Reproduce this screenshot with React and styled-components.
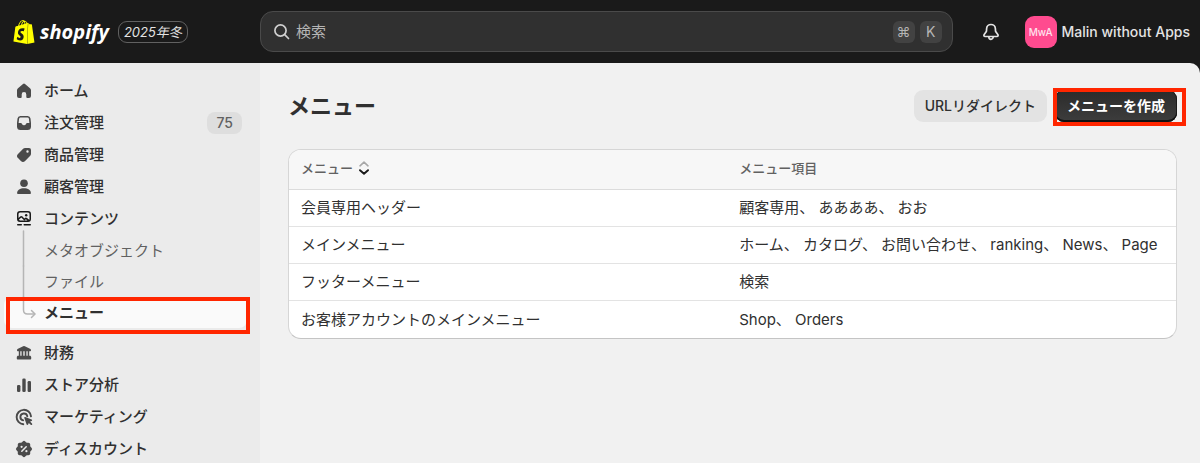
import React from "react";
import styled, { createGlobalStyle, css } from "styled-components";
import { SiShopify } from "react-icons/si";

const GlobalStyle = createGlobalStyle`
  *, *::before, *::after { box-sizing: border-box; }
  body {
    margin: 0;
    background: #1a1a1a;
    color: #303030;
    font-family: Inter, "Noto Sans CJK JP", sans-serif;
    font-size: 15px;
    line-height: 20px;
  }
  button, input { font: inherit; color: inherit; }
  ul { list-style: none; margin: 0; padding: 0; }
`;

const Shell = styled.div`
  display: flex;
  flex-direction: column;
  height: 100vh;
`;

/* ---------- top bar ---------- */

const TopBar = styled.header`
  display: flex;
  align-items: center;
  flex: none;
  height: 63px;
  padding-right: 10px;
  color: #e3e3e3;
`;

const Brand = styled.div`
  display: flex;
  align-items: center;
  width: 260px;
  flex: none;
  padding-left: 12px;
`;

const BrandLink = styled.a`
  display: flex;
  align-items: center;
  gap: 4px;
  color: #fff;
  text-decoration: none;

  svg { color: #ffff00; }
`;

const Wordmark = styled.span`
  font-family: "Open Sans", sans-serif;
  font-size: 20px;
  font-weight: 700;
  font-style: italic;
  line-height: 24px;
`;

const Edition = styled.span`
  margin-left: 9px;
  padding: 0 5px;
  border: 1px solid #616161;
  border-radius: 9px;
  font-size: 13px;
  font-style: italic;
  line-height: 20px;
`;

const Search = styled.label`
  display: flex;
  align-items: center;
  flex: 1;
  min-width: 0;
  height: 41px;
  gap: 6px;
  padding: 0 10px 0 12px;
  background: #303030;
  border: 1px solid #4a4a4a;
  border-radius: 13px;
`;

const SearchInput = styled.input`
  flex: 1;
  min-width: 0;
  padding: 0;
  border: 0;
  outline: 0;
  background: none;

  &::placeholder { color: #b5b5b5; opacity: 1; }
`;

const Keys = styled.span`
  display: flex;
  gap: 5px;
`;

const Key = styled.kbd`
  width: 22px;
  height: 22px;
  border-radius: 6px;
  background: #424242;
  color: #b5b5b5;
  font-family: Inter, "DejaVu Sans", sans-serif;
  font-size: 14px;
  line-height: 22px;
  text-align: center;
`;

const BellButton = styled.button`
  display: grid;
  place-items: center;
  width: 32px;
  height: 32px;
  margin: 0 18px 0 22px;
  padding: 0;
  border: 0;
  background: none;
`;

const Account = styled.button`
  display: flex;
  align-items: center;
  gap: 5px;
  padding: 0;
  border: 0;
  background: none;
  font-size: 14px;
  font-weight: 500;
  white-space: nowrap;
`;

const Avatar = styled.span`
  width: 32px;
  height: 32px;
  border-radius: 9px;
  background: #ff4b8f;
  color: #ffe3ee;
  font-size: 10px;
  font-weight: 500;
  line-height: 32px;
  text-align: center;
`;

/* ---------- sidebar ---------- */

const Body = styled.div`
  display: flex;
  flex: 1;
  min-height: 0;
  overflow: hidden;
  border-top-right-radius: 10px;
  background: #f1f1f1;
`;

const Sidebar = styled.nav`
  flex: none;
  width: 260px;
  padding: 12px 13px 0 4px;
  overflow: hidden;
  background: #ebebeb;
`;

const linkBase = css`
  display: flex;
  align-items: center;
  gap: 10px;
  padding: 0 5px 0 10px;
  text-decoration: none;
`;

const NavLink = styled.a`
  ${linkBase}
  height: 32px;
  color: #303030;
  font-weight: 500;
`;

const NavLabel = styled.span`
  flex: 1;
`;

const NavIcon = styled.svg`
  flex: none;
  width: 20px;
  height: 20px;
  fill: ${(p) => (p.$active ? "#1a1a1a" : "#4a4a4a")};
`;

const Count = styled.span`
  padding: 0 9px;
  border-radius: 8px;
  background: #dedede;
  color: #616161;
  font-size: 14px;
  line-height: 22px;
`;

const SubList = styled.ul`
  margin-bottom: 9px;
`;

const SubLink = styled.a`
  ${linkBase}
  position: relative;
  height: 31px;
  border-radius: 8px;
  color: ${(p) => (p.$selected ? "#303030" : "#616161")};
  background: ${(p) => (p.$selected ? "#fafafa" : "none")};
  font-weight: ${(p) => (p.$selected ? 700 : 400)};
`;

const Connector = styled.svg`
  flex: none;
  width: 20px;
  height: 31px;
  overflow: visible;
  fill: none;
  stroke: #b5b5b5;
  stroke-width: 1.5;
  stroke-linecap: round;
  stroke-linejoin: round;
`;

const Highlight = styled.span`
  position: absolute;
  inset: ${(p) => p.$inset};
  border: 4px solid #ff2600;
  pointer-events: none;
`;

/* ---------- main ---------- */

const Main = styled.main`
  flex: 1;
  min-width: 0;
  padding: 27px 23px 0 28px;
`;

const PageHeader = styled.div`
  display: flex;
  align-items: center;
  justify-content: space-between;
  height: 32px;
  margin-bottom: 27px;
`;

const Title = styled.h1`
  margin: 0;
  font-size: 22px;
  font-weight: 700;
  line-height: 28px;
`;

const Actions = styled.div`
  display: flex;
  gap: 8px;
`;

const ActionSlot = styled.div`
  position: relative;
`;

const Button = styled.button`
  height: 32px;
  padding: 0 11px;
  border: 0;
  border-radius: 9px;
  background: #e3e3e3;
  font-size: 14px;
  font-weight: 500;
  white-space: nowrap;

  ${(p) =>
    p.$primary &&
    css`
      padding: 0 12px;
      background: linear-gradient(#2b2b2b, #3d3d3d);
      box-shadow: inset 0 -2px 0 #111, inset -1px 0 0 #1a1a1a, inset 1px 0 0 #1a1a1a;
      color: #fff;
      font-weight: 700;
    `}
`;

const Card = styled.div`
  overflow: hidden;
  border: 1px solid #d6d6d6;
  border-bottom-color: #c4c4c4;
  border-radius: 13px;
  background: #fff;
`;

const Table = styled.table`
  width: 100%;
  table-layout: fixed;
  border-collapse: separate;
  border-spacing: 0;
  text-align: left;
`;

const HeadCell = styled.th`
  width: ${(p) => p.$width};
  height: 40px;
  padding: 0 12px 3px;
  border-bottom: 1px solid #dcdcdc;
  background: #f7f7f7;
  color: #616161;
  font-size: 13px;
  font-weight: 500;
`;

const SortButton = styled.button`
  display: flex;
  align-items: center;
  gap: 5px;
  padding: 0;
  border: 0;
  background: none;
`;

const Cell = styled.td`
  height: 37px;
  padding: 0 12px;
  border-bottom: 1px solid #e3e3e3;
  white-space: nowrap;

  tr:last-child > & { border-bottom: 0; }
`;

/* ---------- icons ---------- */

const icons = {
  home: (
    <path d="M9 3a1.6 1.6 0 0 1 2 0l5 4.2c.7.6 1 1.3 1 2.1V15a2 2 0 0 1-2 2h-1.7a1 1 0 0 1-1-1v-2.6a2.3 2.3 0 0 0-4.6 0V16a1 1 0 0 1-1 1H5a2 2 0 0 1-2-2V9.300c0-.8.3-1.500 1-2.100z" />
  ),
  orders: (
    <path
      fillRule="evenodd"
      d="M6.500 3h7A3 3 0 0 1 16.500 5.600L17 10v3.500a3.500 3.500 0 0 1-3.500 3.500h-7A3.500 3.500 0 0 1 3 13.500V10l.5-4.400A3 3 0 0 1 6.500 3zM6.600 4.500a1.500 1.500 0 0 0-1.500 1.300L4.600 10h2.200c.6 0 1 .4 1.200.9a2.200 2.200 0 0 0 4 0c.2-.5.6-.9 1.200-.9h2.200l-.5-4.200a1.500 1.500 0 0 0-1.500-1.300z"
    />
  ),
  products: (
    <path
      fillRule="evenodd"
      d="M11.200 3H15a2 2 0 0 1 2 2v3.800c0 .9-.3 1.700-1 2.300l-4.900 4.900a3 3 0 0 1-4.200 0L4 13.100a3 3 0 0 1 0-4.200L8.900 4c.6-.6 1.400-1 2.300-1zM13.500 5.300a1.200 1.200 0 1 0 0 2.400 1.200 1.200 0 0 0 0-2.400z"
    />
  ),
  customers: (
    <>
      <circle cx="10" cy="6.300" r="3.800" />
      <path d="M3.100 16c0-3 3-4.800 6.900-4.800s6.900 1.800 6.900 4.800c0 .7-.4 1-1 1H4.100c-.6 0-1-.3-1-1z" />
    </>
  ),
  content: (
    <>
      <path
        fillRule="evenodd"
        d="M6 2h8a3 3 0 0 1 3 3v5a3 3 0 0 1-3 3H6a3 3 0 0 1-3-3V5a3 3 0 0 1 3-3zM6 3.500A1.500 1.500 0 0 0 4.500 5v4l1.600-1.500a1.700 1.700 0 0 1 2.400 0l1.800 1.900.5-.4a1.700 1.700 0 0 1 2.200 0l2.200 1.800c.2-.2.3-.5.3-.8V5A1.500 1.500 0 0 0 14 3.500zM5 10.600c.2.500.6.900 1.200.9H13.500l-1.600-1.300-1.600 1.300-3-3z"
      />
      <circle cx="12.200" cy="6.200" r="1.200" />
      <rect x="3" y="15" width="5" height="1.500" rx=".7" />
      <rect x="9.500" y="15" width="7.500" height="1.500" rx=".7" />
    </>
  ),
  finance: (
    <path d="M9.200 3.200a1.800 1.800 0 0 1 1.600 0l5.200 2.600c.6.300 1 .8 1 1.400 0 .6-.4 1-1 1H15.200v4.600h.6c.8 0 1.400.7 1.400 1.500v1.200c0 .6-.4 1-1 1H3.800c-.6 0-1-.4-1-1v-1.200c0-.8.6-1.500 1.400-1.500h.6V8.200H4c-.6 0-1-.4-1-1 0-.6.400-1.100 1-1.400zM6.300 8.200v4.600h1.300V8.200zM9.300 8.200v4.600h1.400V8.200zM12.400 8.200v4.600h1.300V8.200z" fillRule="evenodd" />
  ),
  analytics: (
    <>
      <rect x="3" y="10" width="3.400" height="7" rx="1.300" />
      <rect x="8.300" y="3.500" width="3.400" height="13.500" rx="1.300" />
      <rect x="13.600" y="6" width="3.400" height="11" rx="1.300" />
    </>
  ),
  marketing: (
    <>
      <g fill="none" stroke="#4a4a4a" strokeWidth="1.900" strokeLinecap="round">
        <path d="M17 9.300A7.200 7.200 0 1 0 9.300 17.200" />
        <path d="M13.300 9.200A3.500 3.500 0 1 0 9.200 13.400" />
      </g>
      <path d="M10.300 11c-.2-.6.400-1.100 1-.9l6.300 2.300c.7.300.7 1.200 0 1.500l-1.500.7 1.900 1.900a.9.900 0 0 1-1.300 1.300l-1.900-1.900-.7 1.500c-.3.700-1.200.6-1.500 0z" />
    </>
  ),
  discounts: (
    <>
      <rect x="3.800" y="3.800" width="12.400" height="12.400" rx="1.800" />
      <rect x="3.800" y="3.800" width="12.400" height="12.400" rx="1.800" transform="rotate(45 10 10)" />
      <path d="M7.800 12.200l4.400-4.400" stroke="#ebebeb" strokeWidth="1.500" strokeLinecap="round" />
      <circle cx="7.600" cy="7.800" r="1.100" fill="#ebebeb" />
      <circle cx="12.400" cy="12.200" r="1.100" fill="#ebebeb" />
    </>
  ),
};

function NavItem({ icon, label, count, active }) {
  return (
    <NavLink href="#">
      <NavIcon viewBox="0 0 20 20" $active={active} aria-hidden="true">
        {icons[icon]}
      </NavIcon>
      <NavLabel>{label}</NavLabel>
      {count && <Count>{count}</Count>}
    </NavLink>
  );
}

function SubItem({ label, first, selected }) {
  return (
    <SubLink href="#" $selected={selected} aria-current={selected ? "page" : undefined}>
      <Connector viewBox="0 0 20 31" aria-hidden="true">
        {selected ? (
          <>
            <path d="M9.500 0V13Q9.500 17 13.500 17H20.500" />
            <path d="M17.500 13.500L21 17l-3.500 3.500" />
          </>
        ) : (
          <path d={first ? "M9.500 -4V31" : "M9.500 0V31"} />
        )}
      </Connector>
      <NavLabel>{label}</NavLabel>
      {selected && <Highlight $inset="0 -3px -6px 2px" />}
    </SubLink>
  );
}

const menus = [
  ["会員専用ヘッダー", "顧客専用、 ああああ、 おお"],
  ["メインメニュー", "ホーム、 カタログ、 お問い合わせ、 ranking、 News、 Page"],
  ["フッターメニュー", "検索"],
  ["お客様アカウントのメインメニュー", "Shop、 Orders"],
];

export default function App() {
  return (
    <Shell lang="ja">
      <GlobalStyle />
      <TopBar>
        <Brand>
          <BrandLink href="#">
            <SiShopify size={24} aria-hidden="true" />
            <Wordmark>shopify</Wordmark>
          </BrandLink>
          <Edition>2025年冬</Edition>
        </Brand>
        <Search>
          <svg width="17" height="17" viewBox="0 0 17 17" fill="none" stroke="#cfcfcf" strokeWidth="1.700" strokeLinecap="round" aria-hidden="true">
            <circle cx="7.500" cy="7.500" r="5.600" />
            <path d="M11.700 11.700L15.500 15.500" />
          </svg>
          <SearchInput type="search" placeholder="検索" aria-label="検索" />
          <Keys>
            <Key>⌘</Key>
            <Key>K</Key>
          </Keys>
        </Search>
        <BellButton type="button" aria-label="通知">
          <svg width="18" height="18" viewBox="0 0 18 18" fill="none" stroke="#e3e3e3" strokeWidth="1.700" strokeLinejoin="round" aria-hidden="true">
            <path d="M9 1.500a4.400 4.400 0 0 0-4.400 4.200l-.1 2.100c0 .5-.2.900-.5 1.300L2.200 11.500c-.7.900-.2 2 .9 2h11.800c1.100 0 1.600-1.100.9-2L14 9.100c-.3-.4-.5-.8-.5-1.300l-.1-2.100A4.400 4.400 0 0 0 9 1.500z" />
            <path d="M6.800 13.700a2.200 2.600 0 0 0 4.400 0" />
          </svg>
        </BellButton>
        <Account type="button">
          <Avatar>MwA</Avatar>
          Malin without Apps
        </Account>
      </TopBar>
      <Body>
        <Sidebar aria-label="メイン">
          <ul>
            <li><NavItem icon="home" label="ホーム" /></li>
            <li><NavItem icon="orders" label="注文管理" count="75" /></li>
            <li><NavItem icon="products" label="商品管理" /></li>
            <li><NavItem icon="customers" label="顧客管理" /></li>
            <li>
              <NavItem icon="content" label="コンテンツ" active />
              <SubList>
                <li><SubItem label="メタオブジェクト" first /></li>
                <li><SubItem label="ファイル" /></li>
                <li><SubItem label="メニュー" selected /></li>
              </SubList>
            </li>
            <li><NavItem icon="finance" label="財務" /></li>
            <li><NavItem icon="analytics" label="ストア分析" /></li>
            <li><NavItem icon="marketing" label="マーケティング" /></li>
            <li><NavItem icon="discounts" label="ディスカウント" /></li>
          </ul>
        </Sidebar>
        <Main>
          <PageHeader>
            <Title>メニュー</Title>
            <Actions>
              <Button type="button">URLリダイレクト</Button>
              <ActionSlot>
                <Button type="button" $primary>メニューを作成</Button>
                <Highlight $inset="-2px -9px -4px -2px" />
              </ActionSlot>
            </Actions>
          </PageHeader>
          <Card>
            <Table>
              <thead>
                <tr>
                  <HeadCell $width="49.4%" scope="col">
                    <SortButton type="button">
                      メニュー
                      <svg width="12" height="14" viewBox="0 0 12 14" fill="none" strokeWidth="1.600" strokeLinecap="round" strokeLinejoin="round" aria-hidden="true">
                        <path d="M2 4.800L6 1.200l4 3.600" stroke="#a8a8a8" />
                        <path d="M2 9.200l4 3.600 4-3.600" stroke="#1a1a1a" strokeWidth="1.900" />
                      </svg>
                    </SortButton>
                  </HeadCell>
                  <HeadCell scope="col">メニュー項目</HeadCell>
                </tr>
              </thead>
              <tbody>
                {menus.map(([name, items]) => (
                  <tr key={name}>
                    <Cell>{name}</Cell>
                    <Cell>{items}</Cell>
                  </tr>
                ))}
              </tbody>
            </Table>
          </Card>
        </Main>
      </Body>
    </Shell>
  );
}
